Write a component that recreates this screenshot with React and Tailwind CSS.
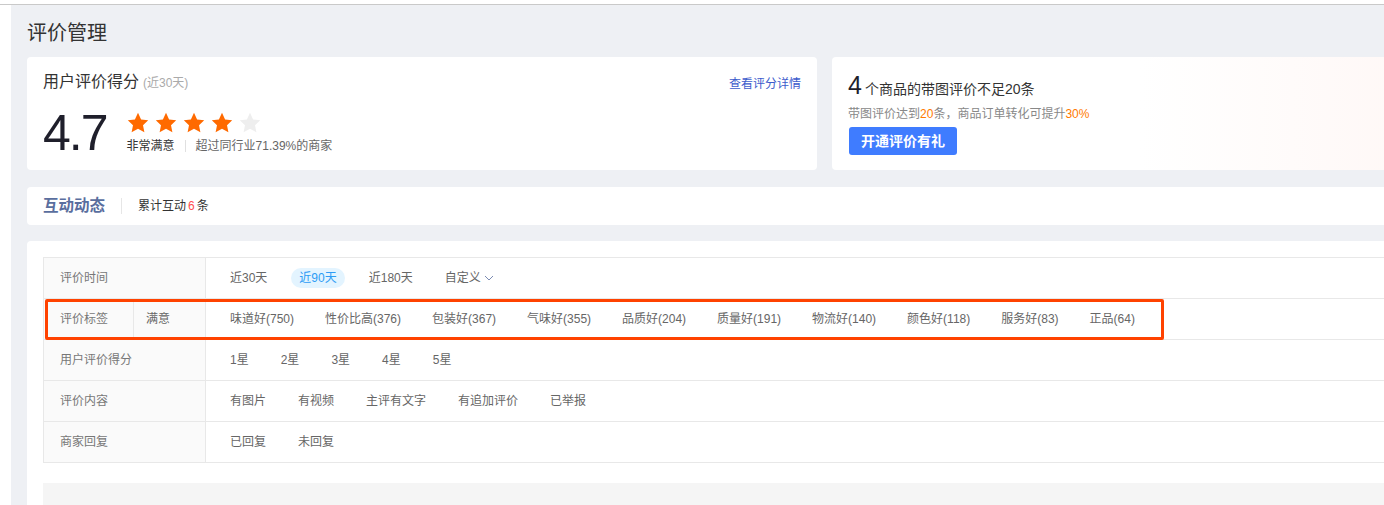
import { useState } from "react";

const Star = ({ on }) => (
  <svg width="24" height="24" viewBox="0 0 24 24" className="shrink-0">
    <path
      d="M12 1.8l3.1 6.6 7.1.9-5.2 4.9 1.4 7.1L12 17.8l-6.4 3.5L7 14.2 1.8 9.3l7.1-.9L12 1.8z"
      fill={on ? "#ff6a00" : "#eeeeee"}
    />
  </svg>
);

const rows = [
  {
    label: "评价时间",
    items: ["近30天", "近90天", "近180天", "自定义"],
  },
  {
    label: "评价标签",
    sub: "满意",
    items: [
      "味道好(750)",
      "性价比高(376)",
      "包装好(367)",
      "气味好(355)",
      "品质好(204)",
      "质量好(191)",
      "物流好(140)",
      "颜色好(118)",
      "服务好(83)",
      "正品(64)",
    ],
  },
  { label: "用户评价得分", items: ["1星", "2星", "3星", "4星", "5星"] },
  {
    label: "评价内容",
    items: ["有图片", "有视频", "主评有文字", "有追加评价", "已举报"],
  },
  { label: "商家回复", items: ["已回复", "未回复"] },
];

export default function App() {
  const [tiempo, setTiempo] = useState("近90天");

  return (
    <div className="w-[1384px] h-[505px] overflow-hidden bg-white font-['Liberation_Sans','Noto_Sans_CJK_SC',sans-serif] text-[#333]">
      <div className="h-[4px] bg-white" />
      <div className="flex border-t border-[#c9c9c9] h-[501px]">
        <div className="w-[11px] shrink-0 bg-white" />
        <div className="flex-1 min-w-0 bg-[#eef0f4] pl-4 pt-[14px] overflow-hidden">
          <div className="w-[1420px]">
            {/* Titulo */}
            <h1 className="text-[20px] leading-[28px] text-[#333] mb-[10px]">评价管理</h1>

            {/* Tarjetas superiores */}
            <div className="flex gap-[15px]">
              <div className="w-[790px] h-[113px] bg-white rounded-[4px] pl-4 pr-4 pt-[14px]">
                <div className="flex items-end justify-between">
                  <div className="flex items-baseline gap-1">
                    <span className="text-[16px] leading-[22px] text-[#333]">用户评价得分</span>
                    <span className="text-[12px] text-[#aaa]">(近30天)</span>
                  </div>
                  <a className="text-[12px] leading-[18px] text-[#3d5ccc] cursor-pointer">查看评分详情</a>
                </div>
                <div className="flex items-center mt-[15px]">
                  <span className="text-[50px] leading-[50px] tracking-[-2px] text-[#1f1f2b]">4.7</span>
                  <div className="ml-5 flex flex-col">
                    <div className="flex gap-[4px] -ml-[1px]">
                      <Star on />
                      <Star on />
                      <Star on />
                      <Star on />
                      <Star />
                    </div>
                    <div className="flex items-center text-[12px] leading-[18px] mt-[2px]">
                      <span className="text-[#333]">非常满意</span>
                      <span className="mx-[10px] w-px h-[12px] bg-[#e0e0e0]" />
                      <span className="text-[#666]">超过同行业71.39%的商家</span>
                    </div>
                  </div>
                </div>
              </div>

              <div className="flex-1 h-[113px] rounded-[4px] bg-gradient-to-r from-white via-white to-[#fff7f5] pl-4 pt-[15px]">
                <div className="flex items-baseline">
                  <span className="text-[25px] leading-[26px] text-[#1f1f2b]">4</span>
                  <span className="text-[14px] text-[#333] ml-[3px]">个商品的带图评价不足20条</span>
                </div>
                <p className="text-[12px] leading-[18px] text-[#888] mt-[5px]">
                  带图评价达到<span className="text-[#ff7a00]">20</span>条，商品订单转化可提升
                  <span className="text-[#ff7a00]">30%</span>
                </p>
                <button className="mt-[4px] ml-[1px] h-[28px] px-[12px] rounded-[3px] bg-[#3f7cff] text-white text-[14px] font-bold cursor-pointer">
                  开通评价有礼
                </button>
              </div>
            </div>

            {/* Interaccion */}
            <div className="mt-[17px] h-[38px] bg-white rounded-[4px] flex items-center pl-4">
              <span className="text-[15.5px] font-bold text-[#5a6e9e]">互动动态</span>
              <span className="ml-[16px] w-px h-[16px] bg-[#e6e6e6]" />
              <span className="ml-4 text-[12px] text-[#333]">
                累计互动<span className="text-[#ff4d4f] mx-[2px]">6</span>条
              </span>
            </div>

            {/* Filtros */}
            <div className="mt-4 bg-white rounded-[4px] pl-4 pt-4 h-[300px]">
              <div className="relative border-t border-l border-[#e8e8e8]">
                {rows.map((row) => (
                  <div key={row.label} className="flex h-[41px] border-b border-[#e8e8e8]">
                    <div className="w-[162px] shrink-0 flex bg-[#fafafa] border-r border-[#e8e8e8] text-[12px] text-[#777]">
                      {row.sub ? (
                        <>
                          <div className="w-[90px] border-r border-[#e8e8e8] flex items-center pl-4">{row.label}</div>
                          <div className="flex items-center pl-3 text-[#666]">{row.sub}</div>
                        </>
                      ) : (
                        <div className="flex items-center pl-4">{row.label}</div>
                      )}
                    </div>
                    <div
                      className={
                        row.sub
                          ? "flex items-center gap-[15px] pl-4 text-[12px] text-[#666]"
                          : "flex items-center gap-4 pl-4 text-[12px] text-[#666]"
                      }
                    >
                      {row.items.map((it) => {
                        const activo = row.label === "评价时间" && it === tiempo;
                        return (
                          <span
                            key={it}
                            onClick={() => row.label === "评价时间" && setTiempo(it)}
                            className={
                              activo
                                ? "px-2 h-[20px] leading-[20px] rounded-full bg-[#e3f4ff] text-[#2d9cf5] cursor-pointer"
                                : "px-2 h-[20px] leading-[20px] cursor-pointer flex items-center"
                            }
                          >
                            {it}
                            {it === "自定义" && (
                              <svg width="10" height="10" viewBox="0 0 10 10" className="ml-[3px]">
                                <polyline points="1,3 5,7 9,3" fill="none" stroke="#7b8bb2" strokeWidth="1" />
                              </svg>
                            )}
                          </span>
                        );
                      })}
                    </div>
                  </div>
                ))}
                {/* Marco resaltado */}
                <div className="absolute left-[1px] top-[41px] w-[1119px] h-[41px] border-[3px] border-[#ff4200] rounded-[2px] pointer-events-none" />
              </div>
              <div className="mt-[20px] h-[60px] bg-[#f5f5f5]" />
            </div>
          </div>
        </div>
      </div>
    </div>
  );
}
